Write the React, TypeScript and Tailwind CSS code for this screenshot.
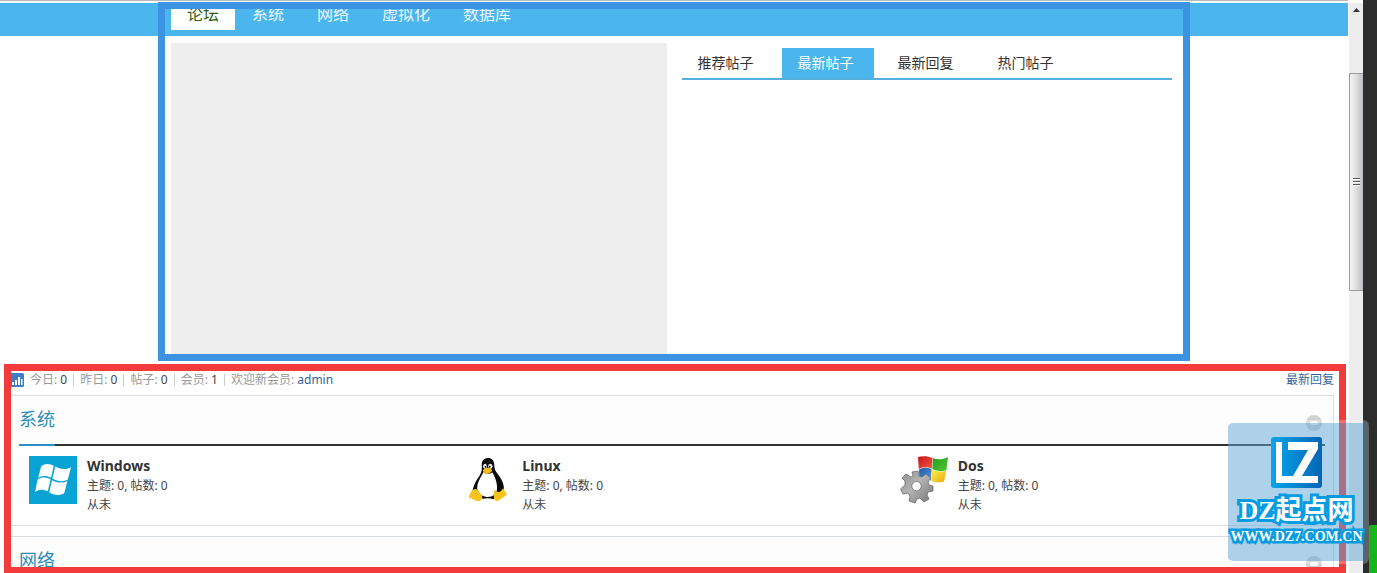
import React from 'react';

type Forum = { name: string; icon: React.ReactNode };

const navItems = ['论坛', '系统', '网络', '虚拟化', '数据库'];
const postTabs = ['推荐帖子', '最新帖子', '最新回复', '热门帖子'];
const stats = [
  { label: '今日', value: 0 },
  { label: '昨日', value: 0 },
  { label: '帖子', value: 0 },
  { label: '会员', value: 1 },
];

function WindowsIcon() {
  return (
    <svg viewBox="0 0 48 48" className="size-12" aria-hidden="true">
      <rect width="48" height="48" fill="#08a3d4" />
      <g fill="#fff">
        <path d="M12.200 10.200C16.200 7 20.500 7.500 24.800 9.800L22 21.600C17.800 19.500 13.500 19.300 9.200 21.800Z" />
        <path d="M26.300 10.600C31 13.400 36.500 14.200 42 11.200L38.800 23.500C34.500 26 28.700 25.600 23.400 22.500Z" />
        <path d="M8.700 23.300C13 20.800 17.400 21 21.600 23.200L18.800 35.300C14.500 33 10 33 6 36Z" />
        <path d="M23 24.200C28 27 33.600 27.500 38.400 25L35.200 37.200C30.600 40 25 39.300 20.200 36.300Z" />
      </g>
    </svg>
  );
}

function LinuxIcon() {
  return (
    <svg viewBox="0 0 48 48" className="size-12" aria-hidden="true">
      <path
        d="M24 2C18.700 2 17.500 6 17.800 10.500C18 15 17.200 17.500 14 22C11 26.500 9 31 8.500 35L16 42H34L40 35C40.500 28 37 22 33 17C30.800 14 30.500 12.500 30.300 9C30 4.500 28 2 24 2Z"
        fill="#0b0b0b"
      />
      <path
        d="M19.600 16C17.500 20 13.800 25 13.200 31C12.900 35 16 40.500 23 41C29 41.200 32.500 38 33 33C33.500 27 31 21 28.500 16.500C25 18.500 22 18.500 19.600 16Z"
        fill="#fff"
      />
      <ellipse cx="21" cy="10.300" rx="1.900" ry="2.500" fill="#eee" />
      <ellipse cx="26.300" cy="10.300" rx="2.200" ry="2.600" fill="#eee" />
      <circle cx="21.500" cy="10.800" r="0.900" fill="#111" />
      <circle cx="25.700" cy="10.800" r="1" fill="#111" />
      <path d="M18.800 14.300C20.500 12 23 11.200 24.300 12C26 12.700 28.300 13.200 28 15C27 16.500 24.500 18 22.700 18C20.800 17.600 19 16 18.800 14.300Z" fill="#f4bd16" />
      <path d="M7.500 35C9 33.500 10.500 33 12 33C14 33.500 15 36 17.500 39C19.300 42 17.500 45.500 14 45C11 44.500 8 42.500 5.500 42C4 41.500 5.800 38 7.500 35Z" fill="#f7c31d" />
      <path d="M31 33.500C32 35.500 34 36.500 36.500 35.500L39 32.500C40.500 33 40 35 42.700 37.500C43.500 38.500 40.500 40.500 37.500 42.500C34.500 45.500 31 46 30 42.500C29.500 39.500 29.300 35.500 31 33.500Z" fill="#f7c31d" />
      <path d="M18.500 42C22 43 26 43 30 41.500V43H18.500Z" fill="#111" />
    </svg>
  );
}

function DosIcon() {
  return (
    <svg viewBox="0 0 48 48" className="size-12" aria-hidden="true">
      <defs>
        <linearGradient id="gear" x1="0" y1="0" x2="1" y2="1">
          <stop offset="0" stopColor="#8f8f8f" />
          <stop offset="0.450" stopColor="#b4b4b4" />
          <stop offset="1" stopColor="#757575" />
        </linearGradient>
        <linearGradient id="red" x1="0" y1="0" x2="1" y2="1">
          <stop offset="0" stopColor="#c9101c" />
          <stop offset="1" stopColor="#ef5a42" />
        </linearGradient>
        <linearGradient id="green" x1="0" y1="0" x2="1" y2="1">
          <stop offset="0" stopColor="#1f9d1c" />
          <stop offset="1" stopColor="#55c832" />
        </linearGradient>
        <linearGradient id="blue" x1="0" y1="0" x2="1" y2="1">
          <stop offset="0" stopColor="#1f58a8" />
          <stop offset="1" stopColor="#4f97e0" />
        </linearGradient>
        <linearGradient id="yellow" x1="0" y1="0" x2="1" y2="1">
          <stop offset="0" stopColor="#fff04a" />
          <stop offset="1" stopColor="#e9a90d" />
        </linearGradient>
      </defs>
      <path d="M18 1C23 -0.500 28 0 32.500 2L31.800 12.500C27 10.800 22.500 10.800 18.800 13Z" fill="url(#red)" />
      <path d="M33 2.200C38 4 43 3.500 48 1L46.500 14C42 16 37 15.300 32.300 13Z" fill="url(#green)" />
      <path d="M19 13.500C23 11.300 27 11.300 31.600 13L30.800 24.500C27 22.500 22 22.500 19.500 24Z" fill="url(#blue)" />
      <path d="M32.200 13.600C37 16 42 16.500 46.300 14.500L44 25.500C40 27 35 26.500 31.300 24.500Z" fill="url(#yellow)" />
      <path
        fill="url(#gear)"
        stroke="#6d6d6d"
        strokeWidth="0.800"
        strokeLinejoin="round"
        fillRule="evenodd"
        d="M12 16L18 15L19 20L22 21L26 18L31 22L28 26L29 29L33 30V35L28 36L27 39L29 43L24 46L20 42L17 43L15 47L9 45L10 40L8 37L3 38L0.500 33L5 29V25L2 22L6 18L11 21L13 20ZM16.500 25.500A4.700 4.700 0 1 0 16.500 34.900A4.700 4.700 0 1 0 16.500 25.500Z"
      />
    </svg>
  );
}

const systemForums: Forum[] = [
  { name: 'Windows', icon: <WindowsIcon /> },
  { name: 'Linux', icon: <LinuxIcon /> },
  { name: 'Dos', icon: <DosIcon /> },
];

function Category({ title, forums }: { title: string; forums: Forum[] }) {
  return (
    <section className="mb-[10px] shrink-0 border border-[#d9dee2] bg-[#fdfdfd] px-2">
      <header className="flex h-[50px] items-start justify-between border-b-2 border-[#333]">
        <h2 className="h-[50px] border-b-2 border-[#2b8fc4] text-lg leading-[46px] text-[#2a8db8]">{title}</h2>
        <button
          type="button"
          aria-label="收起"
          className="mt-[19px] mr-[3px] flex size-4 items-center justify-center rounded-full bg-[#d2d2d2]"
        >
          <span className="h-1 w-2 rounded-sm bg-white" />
        </button>
      </header>
      <div className="-mx-2 grid grid-cols-3 bg-white px-2 pt-[10px] pb-[11px]">
        {forums.map((f) => (
          <article key={f.name} className="flex gap-[10px] pl-[10px] text-xs leading-[19px] text-[#444]">
            {f.icon}
            <div>
              <h3 className="text-sm leading-5 font-bold text-[#333]">
                <a href="#">{f.name}</a>
              </h3>
              <p>主题: 0, 帖数: 0</p>
              <p>从未</p>
            </div>
          </article>
        ))}
      </div>
    </section>
  );
}

function Watermark() {
  return (
    <aside className="absolute top-[420px] right-2 flex h-[144px] w-[141px] flex-col items-center rounded-md border-t-[3px] border-r-4 border-b-[3px] border-white/25 bg-[#5ba6d3]/50 bg-clip-padding pt-[14px] font-bold text-white">
      <svg viewBox="0 0 51 51" className="size-[51px] shrink-0" aria-hidden="true">
        <defs>
          <linearGradient id="logo" x1="0" y1="0" x2="1" y2="0">
            <stop offset="0" stopColor="#0aa5ec" />
            <stop offset="1" stopColor="#0466b5" />
          </linearGradient>
        </defs>
        <rect width="51" height="51" rx="3" fill="url(#logo)" />
        <path d="M5 5H11V39H22L37 13H17V5H47V12L31 39H47V46H5Z" fill="#fff" />
      </svg>
      <p className="mt-[7px] text-[26px] leading-8 font-bold whitespace-nowrap [paint-order:stroke_fill] [-webkit-text-stroke:6px_#079ce2] [stroke-linejoin:round] font-['Liberation_Serif','Noto_Sans_CJK_SC',serif]">
        DZ起点网
      </p>
      <p className="text-sm leading-5 whitespace-nowrap [paint-order:stroke_fill] [-webkit-text-stroke:5px_#079ce2] [stroke-linejoin:round] font-['Liberation_Serif',serif]">
        WWW.DZ7.COM.CN
      </p>
    </aside>
  );
}

function ScrollBar() {
  return (
    <div className="mt-[3px] flex w-[15px] shrink-0 flex-col items-end border-l border-white bg-[#ededed]">
      <div className="flex h-[70px] w-full justify-center pt-[5px]">
        <svg viewBox="0 0 7 4" className="h-1 w-[7px]" aria-hidden="true">
          <path d="M0 4L3.500 0L7 4Z" fill="#334" />
        </svg>
      </div>
      <div className="flex h-[218px] w-full flex-col items-center justify-center gap-px rounded-l-xs border border-r-0 border-[#999] bg-linear-to-r from-[#f5f5f5] via-[#dedee0] to-[#bdbdc3]">
        <span className="h-[2px] w-[7px] border-b border-white bg-[#555]" />
        <span className="h-[2px] w-[7px] border-b border-white bg-[#555]" />
        <span className="h-[2px] w-[7px] border-b border-white bg-[#555]" />
      </div>
    </div>
  );
}

export default function App() {
  return (
    <div className="relative flex h-screen overflow-hidden bg-white font-['Noto_Sans','Noto_Sans_CJK_SC',sans-serif]">
      <main className="flex min-w-0 flex-1 flex-col border-t border-[#b9b9b9] pt-[2px]">
        <div className="shrink-0 bg-[#4bb5ee]">
          <nav className="mx-auto flex h-[33px] max-w-[1032px] items-start gap-px px-[13px] text-base leading-[22px]">
            {navItems.map((item, i) => (
              <a
                key={item}
                href="#"
                className={i === 0 ? 'bg-white px-4 pb-[5px] text-[#2f5f16]' : 'px-4 pb-[5px] text-[#e8f7ff]'}
              >
                {item}
              </a>
            ))}
          </nav>
        </div>

        <div className="relative mx-auto flex w-full max-w-[1032px] shrink-0 gap-[15px] px-[13px] pt-[7px] pb-[7px]">
          <div className="h-[311px] min-w-0 flex-1 bg-[#eee]" />
          <div className="min-w-0 flex-1 pt-[5px]">
            <div role="tablist" className="mr-[5px] flex gap-2 border-b-2 border-[#55aedb] text-sm leading-[30px] text-[#333]">
              {postTabs.map((tab, i) => (
                <button
                  key={tab}
                  type="button"
                  role="tab"
                  aria-selected={i === 1}
                  className={
                    i === 1 ? 'w-23 bg-[#4bb5ee] pl-4 text-left text-white' : 'w-23 pl-4 text-left'
                  }
                >
                  {tab}
                </button>
              ))}
            </div>
          </div>
          <div className="pointer-events-none absolute inset-x-0 -top-[34px] bottom-0 border-[7px] border-[#3c93e2]" />
        </div>

        <div className="relative mt-[3px] mr-[2px] ml-1 flex min-h-0 flex-1 flex-col overflow-hidden pt-[7px] pr-3 pl-[6px]">
          <div className="mb-[6px] flex h-[18px] shrink-0 items-center text-xs leading-[18px] text-[#999]">
            <svg viewBox="0 0 14 14" className="mr-[6px] size-[14px]" aria-hidden="true">
              <rect width="14" height="14" rx="1.500" fill="#3f7ec5" />
              <path d="M2 9H4V12H2ZM5 7H7V12H5ZM8 4H10V12H8ZM11 6H12.500V12H11Z" fill="#fff" />
            </svg>
            {stats.map((s) => (
              <span key={s.label} className="flex items-center">
                <span>
                  {s.label}: <span className="text-[#444]">{s.value}</span>
                </span>
                <span className="mx-[6px] h-3 w-px bg-[#ccc]" />
              </span>
            ))}
            <span>
              欢迎新会员:{' '}
              <a href="#" className="text-[#336699]">
                admin
              </a>
            </span>
            <a href="#" className="ml-auto text-[#336699]">
              最新回复
            </a>
          </div>
          <Category title="系统" forums={systemForums} />
          <Category title="网络" forums={[]} />
          <div className="pointer-events-none absolute inset-0 border-[7px] border-b-[6px] border-[#f43b3c]" />
        </div>
      </main>

      <ScrollBar />
      <div className="flex w-[14px] shrink-0 flex-col items-end justify-end bg-[#2d2d2d]">
        <div className="h-12 w-2 rounded-tl-xs bg-[#16b51c]" />
      </div>
      <Watermark />
    </div>
  );
}
